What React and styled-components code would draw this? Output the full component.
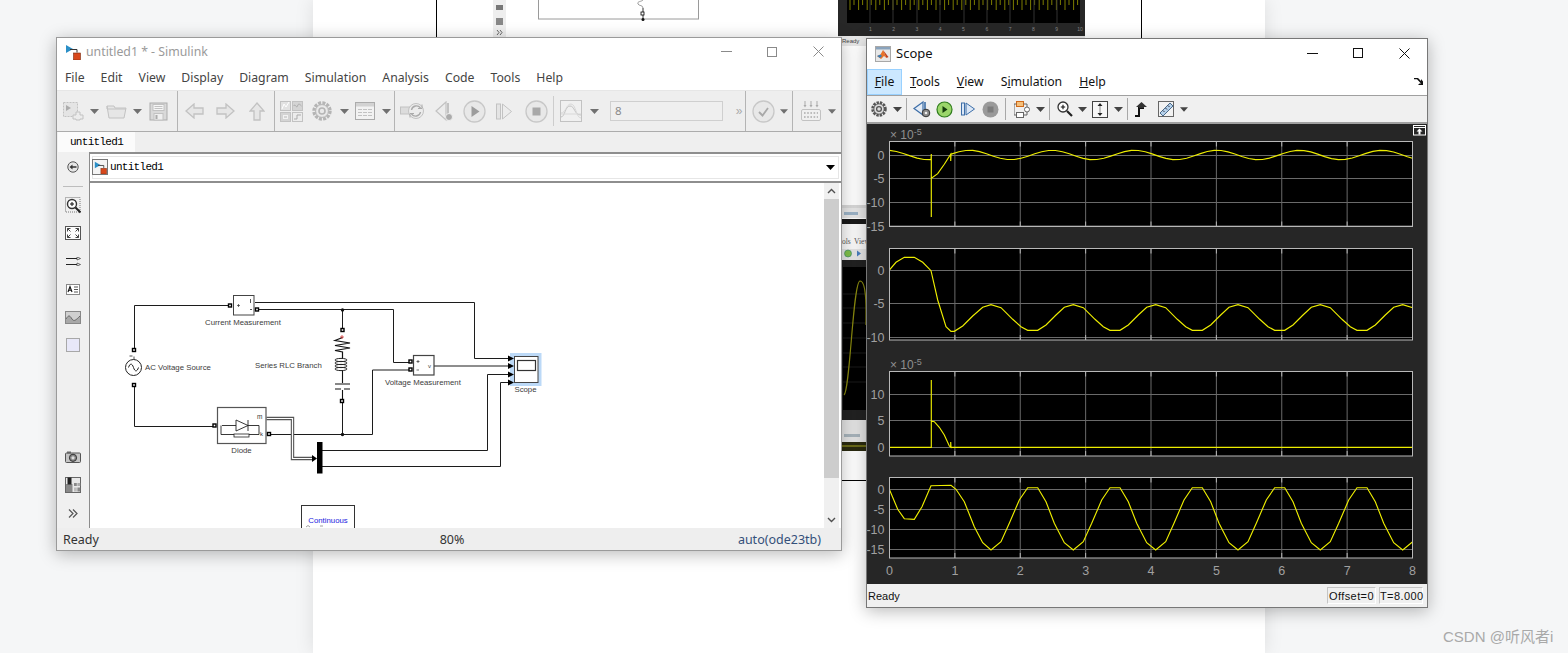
import React from 'react';
import styled, { createGlobalStyle } from 'styled-components';

const Global = createGlobalStyle`
  html, body { margin: 0; padding: 0; height: 100%; overflow: hidden; background: #f5f6f7; }
  body { font-family: "Noto Sans", "Liberation Sans", sans-serif; }
  #root { height: 100%; }
`;

/* ---------- page behind the windows ---------- */
const Desktop = styled.div`
  position: relative;
  width: 1568px;
  height: 653px;
  overflow: hidden;
  background: #f5f6f7;
`;
const Article = styled.div`
  position: absolute;
  left: 313px;
  top: 0;
  width: 952px;
  height: 653px;
  background: #fff;
  box-shadow: 0 0 18px rgba(0, 0, 0, 0.1);
`;
const BackdropArt = styled.svg`
  position: absolute;
  left: 0;
  top: 0;
  display: block;
`;
const Watermark = styled.div`
  position: absolute;
  left: 1443px;
  top: 625px;
  font: 15px "Liberation Sans", "Noto Sans CJK SC", sans-serif;
  color: #a9a9a9;
  white-space: nowrap;
`;

/* ---------- windows ---------- */
const Win = styled.div`
  position: absolute;
  left: ${p => p.$left}px;
  top: ${p => p.$top}px;
  width: ${p => p.$w}px;
  height: ${p => p.$h}px;
  box-sizing: border-box;
  display: flex;
  flex-direction: column;
  background: #f0f0f0;
  border: 1px solid ${p => p.$edge};
  box-shadow: 0 3px 16px rgba(0, 0, 0, 0.28);
`;
const TitleBar = styled.div`
  height: ${p => p.$h}px;
  flex: none;
  box-sizing: border-box;
  display: flex;
  align-items: center;
  background: #fff;
  padding-left: ${p => p.$pad}px;
  font-size: ${p => p.$size}px;
  color: ${p => p.$color};
`;
const TitleText = styled.span`
  margin-left: ${p => p.$gap}px;
  flex: 1;
  white-space: nowrap;
  padding-bottom: ${p => p.$lift || 0}px;
`;
const Caption = styled.div`
  width: 46px;
  height: 100%;
  display: flex;
  align-items: center;
  justify-content: center;
  padding-bottom: ${p => p.$lift || 0}px;
  box-sizing: border-box;
  color: ${p => p.$color};
`;
const MenuBar = styled.div`
  height: ${p => p.$h}px;
  flex: none;
  display: flex;
  align-items: center;
  position: relative;
  gap: ${p => p.$gap}px;
  padding-left: ${p => p.$pad}px;
  background: #fff;
  font-size: 12.25px;
  color: ${p => p.$color};
`;
const MenuItem = styled.span`
  white-space: nowrap;
  padding-bottom: ${p => p.$lift || 0}px;
`;
const MenuActive = styled.span`
  height: 100%;
  box-sizing: border-box;
  width: 35px;
  margin-left: -8px;
  margin-right: -9px;
  padding-bottom: 2px;
  display: flex;
  align-items: center;
  justify-content: center;
  background: #cce8ff;
  border: 1px solid #99d1ff;
`;
const Overflow = styled.span`
  position: absolute;
  right: 4px;
  top: 8px;
  display: flex;
`;

/* ---------- simulink chrome ---------- */
const Toolbar = styled.div`
  height: 42px;
  flex: none;
  box-sizing: border-box;
  display: flex;
  background: #eeeeee;
  border-top: 1px solid #e6e6e6;
  border-bottom: 1px solid #acacac;
`;
const ToolGroup = styled.div`
  flex: ${p => (p.$w ? 'none' : 1)};
  width: ${p => p.$w}px;
  box-sizing: border-box;
  display: flex;
  align-items: center;
  padding-left: ${p => p.$pad || 0}px;
  border-right: 1px solid ${p => (p.$last ? 'transparent' : '#b4b4b4')};
`;
const Tool = styled.div`
  width: ${p => p.$w}px;
  flex: none;
  height: 26px;
  display: flex;
  align-items: center;
  justify-content: center;
  margin-left: ${p => p.$ml || 0}px;
`;
const ToolRule = styled.div`
  width: 1px;
  height: 30px;
  flex: none;
  background: #cdcdcd;
`;
const TimeField = styled.div`
  width: 113px;
  height: 20px;
  flex: none;
  box-sizing: border-box;
  margin-left: 10px;
  padding-left: 4px;
  border: 1px solid #cfcfcf;
  background: #efefef;
  font-size: 11.5px;
  line-height: 18px;
  color: #8a8a8a;
`;
const Chevrons = styled.span`
  font: 12px "Liberation Sans", sans-serif;
  color: ${p => p.$color};
  letter-spacing: -1px;
`;
const TabStrip = styled.div`
  height: 20px;
  flex: none;
  display: flex;
  background: #efefef;
`;
const Tab = styled.div`
  width: 77px;
  margin-left: 1px;
  background: #fbfbfb;
  text-align: center;
  font: 11px/20px "Liberation Mono", monospace;
  letter-spacing: -0.7px;
  color: #000;
`;
const Body = styled.div`
  flex: 1;
  min-height: 0;
  display: flex;
`;
const Sidebar = styled.div`
  width: 32px;
  flex: none;
  display: flex;
  flex-direction: column;
  justify-content: space-between;
  padding: 1px 0;
  box-sizing: border-box;
  background: #f0f0f0;
`;
const SideGroup = styled.div`
  display: flex;
  flex-direction: column;
  align-items: center;
`;
const SideSlot = styled.div`
  height: 28px;
  display: flex;
  align-items: center;
  justify-content: center;
`;
const SideRule = styled.div`
  width: 20px;
  height: 1px;
  margin: 5px 0 4px;
  background: #bdbdbd;
`;
const Main = styled.div`
  flex: 1;
  min-width: 0;
  display: flex;
  flex-direction: column;
  border-left: 1px solid #8c8c8c;
`;
const AddressBar = styled.div`
  height: 31px;
  flex: none;
  box-sizing: border-box;
  display: flex;
  align-items: center;
  gap: 2px;
  padding: 0 6px 1px 2px;
  background: #fff;
  border-top: 2px solid #8e8e8e;
  border-bottom: 2px solid #8e8e8e;
  box-shadow: inset 0 0 0 2px #fff, inset 0 0 0 3px #e6e6e6;
  font: 11px "Liberation Mono", monospace;
  letter-spacing: -0.7px;
  color: #000;
`;
const LogoBox = styled.span`
  width: 16px;
  height: 16px;
  flex: none;
  box-sizing: border-box;
  display: flex;
  align-items: center;
  justify-content: center;
  background: #f4f4f4;
  border: 1px solid #777;
`;
const AddressText = styled.span`
  flex: 1;
`;
const CanvasRow = styled.div`
  flex: 1;
  min-height: 0;
  display: flex;
  padding-right: 2px;
  background: #fff;
`;
const Canvas = styled.div`
  flex: 1;
  min-width: 0;
  background: #fff;
  overflow: hidden;
`;
const ScrollTrack = styled.div`
  width: 15px;
  flex: none;
  display: flex;
  flex-direction: column;
  background: #f0f0f0;
`;
const ScrollBtn = styled.div`
  height: 16px;
  flex: none;
  display: flex;
  align-items: center;
  justify-content: center;
`;
const ScrollThumb = styled.div`
  height: 279px;
  flex: none;
  background: #cdcdcd;
`;
const ScrollRest = styled.div`
  flex: 1;
`;
const SimStatus = styled.div`
  height: 22px;
  flex: none;
  display: grid;
  grid-template-columns: 1fr 1fr 1fr;
  align-items: center;
  padding: 0 20px 0 6px;
  font-size: 12.5px;
  color: #333;
  background: #eeeeee;
`;
const StatusMid = styled.span`
  text-align: center;
  padding-left: 20px;
`;
const StatusRight = styled.span`
  text-align: right;
  color: #34507a;
`;

/* ---------- scope chrome ---------- */
const ScopeTools = styled.div`
  height: 29px;
  flex: none;
  box-sizing: border-box;
  display: flex;
  align-items: center;
  padding-left: 3px;
  background: #f0f0f0;
  border-top: 1px solid #a0a0a0;
  border-bottom: 2px solid #a0a0a0;
`;
const ScopeRule = styled.div`
  width: 1px;
  height: 22px;
  flex: none;
  background: #a8a8a8;
  margin-left: ${p => p.$l || 0}px;
  margin-right: ${p => p.$r || 0}px;
`;
const PlotPanel = styled.div`
  flex: 1;
  min-height: 0;
  display: flex;
  flex-direction: column;
  background: #262626;
`;
const PlotSvg = styled.svg`
  display: block;
  flex: none;
  font-family: "Liberation Sans", sans-serif;
`;
const ScopeStatus = styled.div`
  height: 23px;
  flex: none;
  display: flex;
  align-items: center;
  padding-right: 4px;
  background: #f0f0f0;
  font: 11px "Liberation Sans", sans-serif;
  color: #111;
`;
const ScopeReady = styled.span`
  flex: 1;
  padding-left: 1px;
`;
const StatusCell = styled.span`
  width: ${p => p.$w}px;
  height: 17px;
  margin-left: 3px;
  box-sizing: border-box;
  border: 1px solid #c4c4c4;
  border-right-color: #fff;
  border-bottom-color: #fff;
  line-height: 16px;
  text-align: center;
  letter-spacing: 0.4px;
`;

/* ---------- icons ---------- */
const G = '#c2c2c2';
const GD = '#ababab';

const Drop = ({ c = '#707070' }) => (
  <svg width="9" height="5" viewBox="0 0 9 5"><path d="M0 0h9L4.5 5z" fill={c} /></svg>
);
const LibIcon = () => (
  <svg width="22" height="20" viewBox="0 0 22 20">
    <rect x="1.5" y="1.5" width="14" height="14" fill="#e4e4e4" stroke={G} strokeDasharray="2 1" />
    <path d="M4 4v6l5-3z" fill={GD} />
    <path d="M14 11h4v3h3v4h-3v1h-4v-1h-3v-4h3z" fill="#ececec" stroke={G} />
  </svg>
);
const FolderIcon = () => (
  <svg width="21" height="15" viewBox="0 0 21 15">
    <path d="M1 2h7l1 2h11l-2 10H3z" fill="#e6e6e6" stroke={G} />
    <path d="M1 2v3h19" fill="none" stroke={G} />
  </svg>
);
const SaveIcon = () => (
  <svg width="19" height="19" viewBox="0 0 19 19">
    <rect x="1" y="1" width="17" height="17" fill="#d9d9d9" stroke={GD} />
    <rect x="4" y="2.5" width="11" height="6" fill="#f6f6f6" stroke={G} />
    <path d="M5.5 4.5h8M5.5 6.5h8" stroke={G} />
    <rect x="5" y="11.5" width="9" height="6.5" fill="#efefef" stroke={G} />
    <rect x="6.5" y="13" width="2" height="4" fill={GD} />
  </svg>
);
const ArrowL = () => (
  <svg width="19" height="16" viewBox="0 0 19 16"><path d="M1 8l8-7v4h9v6H9v4z" fill="#e6e6e6" stroke={G} strokeWidth="1.3" /></svg>
);
const ArrowR = () => (
  <svg width="19" height="16" viewBox="0 0 19 16"><path d="M18 8l-8-7v4H1v6h9v4z" fill="#e6e6e6" stroke={G} strokeWidth="1.3" /></svg>
);
const ArrowU = () => (
  <svg width="16" height="19" viewBox="0 0 16 19"><path d="M8 1l7 8h-4v9H5V9H1z" fill="#e6e6e6" stroke={G} strokeWidth="1.3" /></svg>
);
const ModelGrid = () => (
  <svg width="23" height="21" viewBox="0 0 23 21">
    <rect x="0.5" y="0.5" width="10" height="9" fill="#e2e2e2" stroke={G} />
    <path d="M2 8l2-5 2 3 3-5" fill="none" stroke="#fff" />
    <rect x="12.5" y="0.5" width="10" height="9" fill="#d4d4d4" stroke={G} />
    <path d="M13.5 5c2-3 3 3 4 0s2-2 4 0" fill="none" stroke={GD} />
    <rect x="0.5" y="11.5" width="10" height="9" fill="#d4d4d4" stroke={G} />
    <rect x="3.5" y="14.5" width="4" height="3" fill="none" stroke="#f2f2f2" />
    <rect x="12.5" y="11.5" width="10" height="9" fill="#ececec" stroke={G} />
    <path d="M14 18h3v-4h4" fill="none" stroke={GD} />
  </svg>
);
const Gear = ({ size = 20, c = '#b5b5b5', in2 = '#e9e9e9' }) => (
  <svg width={size} height={size} viewBox="0 0 20 20">
    <circle cx="10" cy="10" r="8" fill="none" stroke={c} strokeWidth="3.4" strokeDasharray="3 1.2" />
    <circle cx="10" cy="10" r="6.4" fill={in2} stroke={c} />
    <circle cx="10" cy="10" r="3" fill="none" stroke={c} strokeWidth="1.6" />
  </svg>
);
const TableIcon = () => (
  <svg width="20" height="18" viewBox="0 0 20 18">
    <rect x="0.5" y="0.5" width="19" height="17" fill="#f2f2f2" stroke={GD} />
    <rect x="1" y="1" width="18" height="3.5" fill="#d2d2d2" />
    <path d="M3 7.5h14M3 10.5h14M3 13.5h14" stroke={G} strokeDasharray="4 1" />
  </svg>
);
const RefreshIcon = () => (
  <svg width="25" height="20" viewBox="0 0 25 20">
    <rect x="0.5" y="6" width="10" height="7" fill="#dcdcdc" stroke={G} />
    <circle cx="16" cy="10" r="7.5" fill="#ececec" stroke={G} />
    <path d="M11.5 9a5 5 0 0 1 9-2M20.5 11a5 5 0 0 1-9 2" fill="none" stroke={GD} strokeWidth="1.4" />
    <path d="M18 7.5h4V3.5M14 12.5h-4v4" fill="none" stroke={GD} />
  </svg>
);
const StepBackGray = () => (
  <svg width="19" height="21" viewBox="0 0 19 21">
    <path d="M11 1L1 10l10 9z" fill="#ececec" stroke={G} strokeWidth="1.2" />
    <path d="M13 2v15" stroke={G} strokeWidth="2" />
    <circle cx="14" cy="16" r="3.5" fill={GD} stroke="#eee" />
  </svg>
);
const RoundBtn = ({ children }) => (
  <svg width="23" height="23" viewBox="0 0 23 23">
    <circle cx="11.5" cy="11.5" r="10.5" fill="#e8e8e8" stroke="#c8c8c8" strokeWidth="1.3" />
    {children}
  </svg>
);
const StepFwdGray = () => (
  <svg width="16" height="17" viewBox="0 0 16 17">
    <rect x="0.5" y="1" width="4" height="15" fill="#e4e4e4" stroke={G} />
    <path d="M6.5 1l9 7.5-9 7.5z" fill="#ececec" stroke={G} />
  </svg>
);
const ScopeMini = () => (
  <svg width="22" height="22" viewBox="0 0 22 22">
    <rect x="0.5" y="0.5" width="21" height="21" fill="#f0f0f0" stroke={G} />
    <path d="M1 17c4 0 4-11 9-11s4 9 11 9" fill="none" stroke={G} />
    <path d="M1 13c5 0 5-9 10-9s5 14 10 14" fill="none" stroke="#d8d8d8" />
    <path d="M1 14h20" stroke="#d8d8d8" />
  </svg>
);
const KeyIcon = () => (
  <svg width="20" height="20" viewBox="0 0 20 20">
    <rect x="0.5" y="8.5" width="19" height="11" rx="1.5" fill="#f0f0f0" stroke={G} />
    <path d="M3 12h14M3 16h14" stroke={GD} strokeWidth="1.6" strokeDasharray="1.6 1.6" />
    <path d="M4 0v5M10 0v5M16 0v5" stroke={GD} />
    <path d="M2.5 4h3L4 6.5zM8.5 4h3L10 6.5zM14.5 4h3L16 6.5z" fill={GD} />
  </svg>
);
const SimLogo = ({ size = 16 }) => (
  <svg width={size} height={size} viewBox="0 0 16 16">
    <path d="M1 1v8l7-4z" fill="#2b8fc7" />
    <path d="M5 5.500h7v3" fill="none" stroke="#333" />
    <rect x="8.500" y="9" width="7" height="7" fill="#d8481c" stroke="#7a2a10" strokeWidth="0.6" />
  </svg>
);
const MatlabLogo = () => (
  <svg width="16" height="16" viewBox="0 0 16 16">
    <rect x="0.5" y="0.5" width="15" height="15" fill="#e8e8e8" stroke="#a8a8a8" />
    <rect x="1" y="1" width="14" height="2.5" fill="#8aa3bc" />
    <path d="M2 10l3.5-1.5L8 4l3.5 8-2.5-2-3 3z" fill="#e8742a" />
    <path d="M2 10l3.5-1.5L7 10l-2 2z" fill="#3a7fb8" />
    <path d="M8 4l3.5 8 2-1z" fill="#c2401c" />
  </svg>
);
const SideBack = () => (
  <svg width="12" height="12" viewBox="0 0 12 12">
    <circle cx="6" cy="6" r="5.2" fill="#e6e6e6" stroke="#555" />
    <path d="M2.5 6l3-2.4v1.6h4v1.6h-4v1.6z" fill="#333" />
  </svg>
);
const ZoomSide = () => (
  <svg width="16" height="17" viewBox="0 0 16 17">
    <rect x="0.5" y="0.5" width="14.5" height="14.5" fill="none" stroke="#777" strokeDasharray="1 1" />
    <circle cx="7" cy="7" r="4.5" fill="#fff" stroke="#333" strokeWidth="1.4" />
    <path d="M5 7h4M7 5v4" stroke="#111" />
    <path d="M10.5 10.5l5 5" stroke="#222" strokeWidth="2" />
  </svg>
);
const FitSide = () => (
  <svg width="16" height="14" viewBox="0 0 16 14">
    <rect x="0.5" y="0.5" width="15" height="13" fill="#fdfdfd" stroke="#555" />
    <path d="M2.5 2.5h3M2.5 2.5v3M2.5 2.5l3 3M13.5 2.5h-3M13.5 2.5v3M13.5 2.5l-3 3M2.5 11.5h3M2.5 11.5v-3M2.5 11.5l3-3M13.5 11.5h-3M13.5 11.5v-3M13.5 11.5l-3-3" stroke="#444" fill="none" />
  </svg>
);
const RouteSide = () => (
  <svg width="15" height="9" viewBox="0 0 15 9">
    <path d="M0 1.5h11M0 7.5h11" stroke="#222" />
    <path d="M11 0l3.5 1.5L11 3zM11 6l3.5 1.5L11 9z" fill="#fff" stroke="#333" strokeWidth="0.7" />
  </svg>
);
const TextSide = () => (
  <svg width="14" height="11" viewBox="0 0 14 11">
    <rect x="0.5" y="0.5" width="13" height="10" fill="#fff" stroke="#888" />
    <path d="M2 8l2-5.5L6 8M2.8 6.2h2.4" fill="none" stroke="#111" strokeWidth="1.1" />
    <path d="M8 3h4M8 5.5h4M8 8h4" stroke="#555" />
  </svg>
);
const ImageSide = () => (
  <svg width="16" height="13" viewBox="0 0 16 13">
    <rect x="0.5" y="0.5" width="15" height="12" fill="#d0d0d0" stroke="#888" />
    <path d="M1 8c3-5 4-3 6 0s4 1 8-3v7H1z" fill="#a8a8a8" />
    <path d="M1 8c3-5 4-3 6 0s4 1 8-3" fill="none" stroke="#666" />
  </svg>
);
const BoxSide = () => (
  <svg width="14" height="14" viewBox="0 0 14 14">
    <rect x="0.5" y="0.5" width="13" height="13" fill="#e8e8f8" stroke="#a8a8a8" />
  </svg>
);
const CameraSide = () => (
  <svg width="16" height="12" viewBox="0 0 16 12">
    <rect x="0.5" y="2" width="15" height="9.5" rx="1" fill="#c4c4c4" stroke="#555" />
    <rect x="2" y="0.5" width="4" height="2" fill="#666" />
    <circle cx="8" cy="6.8" r="3.6" fill="#888" stroke="#333" />
    <circle cx="8" cy="6.8" r="1.6" fill="#ddd" />
  </svg>
);
const TableSide = () => (
  <svg width="16" height="16" viewBox="0 0 16 16">
    <rect x="0.5" y="0.5" width="15" height="15" fill="#e8e8e8" stroke="#666" />
    <rect x="9" y="6" width="2.8" height="3" fill="#888" />
    <rect x="12.4" y="6" width="2.8" height="3" fill="#aaa" />
    <rect x="9" y="10.5" width="2.8" height="4" fill="#bbb" />
    <rect x="12.4" y="10.5" width="2.8" height="4" fill="#888" />
    <rect x="1" y="7" width="6.5" height="8" fill="#888" />
    <rect x="2.5" y="0.5" width="4" height="7" fill="#222" />
  </svg>
);
const SideChev = () => (
  <svg width="10" height="9" viewBox="0 0 10 9">
    <path d="M1 .5l4 4-4 4M5 .5l4 4-4 4" fill="none" stroke="#555" strokeWidth="1.2" />
  </svg>
);
const MinIcon = () => (<svg width="11" height="1" viewBox="0 0 11 1"><path d="M0 .5h11" stroke="currentColor" /></svg>);
const MaxIcon = () => (<svg width="10" height="10" viewBox="0 0 10 10"><rect x=".5" y=".5" width="9" height="9" fill="none" stroke="currentColor" /></svg>);
const CloseIcon = () => (<svg width="11" height="11" viewBox="0 0 11 11"><path d="M.5.5l10 10M10.5.5l-10 10" stroke="currentColor" /></svg>);

/* scope toolbar icons */
const StepBackColor = () => (
  <svg width="20" height="18" viewBox="0 0 20 18">
    <path d="M11 2L2 8.5l9 6.500z" fill="#e4ecf6" stroke="#3d6ea8" strokeWidth="1.2" />
    <path d="M13 2v11" stroke="#3d6ea8" strokeWidth="1.6" />
    <circle cx="14" cy="13" r="3.8" fill="#8a8a8a" stroke="#333" />
    <circle cx="14" cy="13" r="1.3" fill="#eee" />
  </svg>
);
const PlayGreen = () => (
  <svg width="17" height="17" viewBox="0 0 17 17">
    <circle cx="8.5" cy="8.5" r="7.5" fill="#9bd66a" stroke="#2f7d1d" strokeWidth="1.2" />
    <path d="M6.500 5l5 3.500-5 3.500z" fill="#153d0c" />
  </svg>
);
const StepFwdBlue = () => (
  <svg width="14" height="14" viewBox="0 0 14 14">
    <rect x="0.5" y="1" width="3" height="12" fill="#dbe7f6" stroke="#3d6ea8" />
    <path d="M5 1l8.500 6L5 13z" fill="#dbe7f6" stroke="#3d6ea8" />
  </svg>
);
const StopGray = () => (
  <svg width="17" height="17" viewBox="0 0 17 17">
    <circle cx="8.5" cy="8.5" r="8" fill="#9a9a9a" />
    <rect x="5.5" y="5.5" width="6" height="6" fill="#7c7c7c" />
  </svg>
);
const BlockIcon = () => (
  <svg width="17" height="17" viewBox="0 0 17 17">
    <rect x="2.5" y="0.5" width="7" height="5" fill="#f6c07a" stroke="#d06a1a" />
    <rect x="2.5" y="11.5" width="7" height="5" fill="#fff" stroke="#666" />
    <circle cx="13" cy="8.5" r="2.5" fill="#fff" stroke="#666" />
    <path d="M0 3h2.500M0 3v11h2.500M9.500 3H13v3M9.500 14H13v-3" fill="none" stroke="#666" />
  </svg>
);
const ZoomIcon = () => (
  <svg width="16" height="16" viewBox="0 0 16 16">
    <circle cx="6" cy="6" r="5" fill="#fff" stroke="#333" strokeWidth="1.3" />
    <path d="M3.800 6h4.400M6 3.800v4.400" stroke="#111" strokeWidth="1.1" />
    <path d="M10 10l5 5" stroke="#222" strokeWidth="2.2" />
  </svg>
);
const ScaleIcon = () => (
  <svg width="16" height="17" viewBox="0 0 16 17">
    <rect x="0.5" y="0.5" width="15" height="16" fill="#f7f7f7" stroke="#444" />
    <path d="M8 2l2.500 3h-5zM8 15l2.500-3h-5z" fill="#222" />
    <path d="M8 5v7" stroke="#888" />
  </svg>
);
const StairIcon = () => (
  <svg width="14" height="16" viewBox="0 0 14 16">
    <path d="M1 15h4V7h4V4" fill="none" stroke="#111" strokeWidth="2" />
    <path d="M2 6l5.500-5L13 6h-3v1H5V6z" fill="#333" />
  </svg>
);
const RulerIcon = () => (
  <svg width="17" height="17" viewBox="0 0 17 17">
    <rect x="0.5" y="0.5" width="15" height="15" fill="#f2f2f2" stroke="#666" />
    <path d="M2 12L12 2l3 3L5 15z" fill="#b4d0ea" stroke="#4a6a8a" />
    <path d="M5 9.500l1.500 1.500M7.500 7l1.500 1.500M10 4.500L11.500 6" stroke="#334" />
  </svg>
);
const OverflowIcon = () => (
  <svg width="9" height="8" viewBox="0 0 9 8">
    <path d="M0 1h4l3 3V2l2 2.500V8H4l1.500-1.500H7L3 2.200H0z" fill="#111" />
  </svg>
);

/* ---------- simulink diagram ---------- */
const Port = ({ x, y }) => <rect x={x - 1.5} y={y - 1.5} width="3" height="3" fill="#fff" stroke="#000" strokeWidth="1.4" />;
const Dot = ({ x, y }) => <circle cx={x} cy={y} r="1.7" fill="#111" />;
const Arrow = ({ y }) => <path d={`M508 ${y - 3}l6 3-6 3z`} fill="#000" />;
const Lbl = ({ x, y, a = 'start', c = '#3c3c3c', children }) => (
  <text x={x} y={y} textAnchor={a} fontSize="7.8" fontFamily="Liberation Sans, sans-serif" fill={c}>{children}</text>
);

const Diagram = () => (
  <svg width="735" height="345" viewBox="90 183 735 345" style={{ display: 'block' }}>
    <g fill="none" stroke="#1c1c1c" strokeWidth="1">
      <path d="M134.500 350V305.500H229" />
      <path d="M134.500 386V426.500H213" />
      <path d="M255 302.500H474.500V358.500H508" />
      <path d="M258 309.500H393.500V362.500H409" />
      <path d="M342.500 310V329M342.500 403V435" />
      <path d="M270 434.500H372.500V370H409" />
      <path d="M434 366H508" />
      <path d="M322 450.500H487.500V374.500H508" />
      <path d="M322 466.500H500.500V382.500H508" />
    </g>
    <path d="M266.500 418.500H292.500V458.500H313" fill="none" stroke="#555" strokeWidth="3.400" />
    <path d="M266.500 418.500H292.500V458.500H313" fill="none" stroke="#fff" strokeWidth="1.200" />
    <path d="M312 455l5 3.500-5 3.500z" fill="#000" />
    <rect x="317" y="442" width="5.500" height="31.500" fill="#000" />

    <rect x="233.500" y="295.500" width="20.500" height="19.500" fill="#fff" stroke="#444" />
    <path d="M237 305.500h3M238.500 304v3" stroke="#333" strokeWidth="0.7" />
    <path d="M250.500 299v4M250 309.500h2" stroke="#555" />
    <Port x={230} y={305.500} />
    <Port x={257} y={309.500} />
    <Dot x={342.500} y={310} />
    <Dot x={342.500} y={434.500} />
    <Lbl x={205} y={325}>Current Measurement</Lbl>

    <circle cx="133.500" cy="367.500" r="8" fill="#fff" stroke="#222" />
    <path d="M128.500 367.500c1.500-4.500 3.500-4.500 5 0s3.500 4.500 5 0" fill="none" stroke="#222" />
    <path d="M134 356.500v3M129.500 356h3" stroke="#222" strokeWidth="0.8" />
    <Port x={134} y={350} />
    <Port x={134} y={385} />
    <Lbl x={145} y={370}>AC Voltage Source</Lbl>

    <rect x="217.500" y="407.500" width="48.500" height="36" fill="#fff" stroke="#555" strokeWidth="1.200" />
    <path d="M222 425.500h14M236 420v11l12-5.500zM248 420v11M248 425.500h11v9h-38v-9" fill="none" stroke="#222" strokeWidth="0.9" />
    <rect x="234" y="434" width="15" height="3" fill="#fff" stroke="#222" strokeWidth="0.8" />
    <text x="257" y="419" fontSize="6.500" fill="#333" fontFamily="Liberation Sans, sans-serif">m</text>
    <text x="260" y="436" fontSize="6" fill="#333" fontFamily="Liberation Sans, sans-serif">k</text>
    <Port x={214.500} y={425.500} />
    <Port x={269} y={434} />
    <Lbl x={241.500} y={453} a="middle">Diode</Lbl>

    <Port x={342.500} y={330} />
    <Port x={342} y={401} />
    <path d="M342.500 337.500L335 340.500l15 2.500-15 2.500 15 2.500-15 2.500 7.500 1.500v6" fill="none" stroke="#111" strokeWidth="1.200" />
    <path d="M340 337h4M342 335v4" stroke="#c22" strokeWidth="0.7" />
    <g fill="none" stroke="#222" strokeWidth="1">
      <ellipse cx="341" cy="360" rx="6" ry="1.600" />
      <ellipse cx="341" cy="363" rx="6" ry="1.600" />
      <ellipse cx="341" cy="366" rx="6" ry="1.600" />
      <ellipse cx="341" cy="369" rx="6" ry="1.600" />
    </g>
    <path d="M342.500 371v12M335 384h15M335 389h6M344 389h6M342.500 390v9" fill="none" stroke="#111" strokeWidth="1.100" />
    <Lbl x={255} y={368}>Series RLC Branch</Lbl>

    <rect x="413.500" y="355.500" width="20.500" height="19.500" fill="#fff" stroke="#444" strokeWidth="1.200" />
    <path d="M416.500 361.500h3M418 360v3M416.500 370h2.500" stroke="#333" strokeWidth="0.7" />
    <text x="428" y="368" fontSize="6" fill="#444" fontFamily="Liberation Sans, sans-serif">v</text>
    <Port x={410.500} y={361.500} />
    <Port x={410.500} y={369.500} />
    <Lbl x={385} y={385}>Voltage Measurement</Lbl>

    <rect x="510" y="353" width="31.500" height="33" fill="#bcd9f7" />
    <rect x="514.500" y="356.500" width="23.500" height="26" fill="#fff" stroke="#444" />
    <rect x="517.500" y="360.500" width="18" height="10" fill="#fff" stroke="#333" strokeWidth="1.200" />
    <Arrow y={358.500} />
    <Arrow y={366} />
    <Arrow y={374.500} />
    <Arrow y={382.500} />
    <Lbl x={525.500} y={392} a="middle">Scope</Lbl>

    <rect x="301.500" y="505.500" width="53" height="30" fill="#fff" stroke="#333" />
    <Lbl x={328} y={523} a="middle" c="#1a1ae0">Continuous</Lbl>
    <path d="M306 527l2-1.500 2 1.500M320 526h3" fill="none" stroke="#888" strokeWidth="0.8" />
  </svg>
);

/* ---------- scope plots ---------- */
const AX_L = 889.5;
const AX_R = 1412.5;
const SEC = (AX_R - AX_L) / 8;
const zp = (pts, oy) => pts.map(([x, y]) => [866 + x / 3, oy + y / 3]);
const repeat = (cycle, period, maxX) => {
  const out = [];
  for (let k = 0; ; k++) {
    for (const [x, y] of cycle) {
      const nx = x + k * period;
      if (nx > maxX) return out;
      out.push([nx, y]);
    }
  }
};
const str = pts => pts.map(([x, y]) => `${x.toFixed(1)},${y.toFixed(1)}`).join(' ');

const wave = x => 155 - 4.7 * Math.cos((2 * Math.PI * (x - 887)) / 82.5);
const sample = (a, b) => {
  const out = [];
  for (let x = a; x < b; x += 6.9) out.push([x, wave(x)]);
  out.push([b, wave(b)]);
  return out;
};
const curve1 = [
  ...sample(AX_L, 931),
  [931.3, 154], [931.3, 217], [931.3, 178.3],
  ...zp([[215, 413], [235, 385], [254, 355], [254, 375], [255, 355]], 36),
  ...sample(952, AX_R),
];
const curve2 = [
  ...zp([[70, 120], [90, 97], [115, 82], [145, 82], [170, 97], [195, 122], [215, 210], [240, 290], [255, 304], [265, 304], [290, 288], [320, 258], [350, 232]], 230),
  ...zp(repeat([[375, 224], [405, 233], [440, 268], [465, 290], [485, 301], [515, 301], [540, 285], [570, 255], [595, 232]], 247, 1700), 230),
];
const curve3 = zp([[70, 652], [196, 652], [196, 450], [196, 573], [205, 575], [220, 592], [235, 615], [250, 648], [254, 652], [254, 636], [255, 652], [1641, 652]], 230);
const curve4 = [
  ...zp([[70, 148], [95, 208], [115, 236], [145, 238], [168, 200], [195, 137], [255, 136], [270, 148], [295, 185], [325, 260], [350, 308]], 440),
  ...zp(repeat([[375, 330], [405, 305], [430, 250], [460, 180], [485, 143], [515, 143], [540, 185], [565, 250], [595, 308]], 247, 1700), 440),
];

const Exponent = ({ y }) => (
  <text x={890} y={y} fill="#8f8f8f" fontSize="12">
    <tspan>× 10</tspan>
    <tspan fontSize="9" dy="-4">-5</tspan>
  </text>
);

const Plot = ({ id, top, height, y0, y1, ticks, pts, exp, xLabels, children }) => (
  <PlotSvg width="560" height={height} viewBox={`867 ${top} 560 ${height}`}>
    <defs>
      <clipPath id={id}><rect x={AX_L} y={y0} width={AX_R - AX_L} height={y1 - y0} /></clipPath>
    </defs>
    <rect x={AX_L} y={y0} width={AX_R - AX_L} height={y1 - y0} fill="#000" />
    {ticks.map(t => (
      <line key={t.l} x1={AX_L} x2={AX_R} y1={t.y} y2={t.y} stroke="#6a6a6a" />
    ))}
    {[1, 2, 3, 4, 5, 6, 7].map(k => (
      <g key={k}>
        <line x1={AX_L + k * SEC} x2={AX_L + k * SEC} y1={y0} y2={y1} stroke="#6a6a6a" />
        <line x1={AX_L + k * SEC} x2={AX_L + k * SEC} y1={y0} y2={y0 + 5} stroke="#b4b4b4" />
        <line x1={AX_L + k * SEC} x2={AX_L + k * SEC} y1={y1 - 5} y2={y1} stroke="#b4b4b4" />
      </g>
    ))}
    <polyline points={str(pts)} fill="none" stroke="#eded00" strokeWidth="1.15" clipPath={`url(#${id})`} />
    <rect x={AX_L} y={y0} width={AX_R - AX_L} height={y1 - y0} fill="none" stroke="#b8b8b8" />
    {ticks.map(t => (
      <text key={t.l} x="884.5" y={t.y + 4.5} fill="#a0a0a0" fontSize="12.5" textAnchor="end">{t.l}</text>
    ))}
    {exp && <Exponent y={exp} />}
    {xLabels && [0, 1, 2, 3, 4, 5, 6, 7, 8].map(k => (
      <text key={k} x={AX_L + k * SEC} y={xLabels} fill="#a0a0a0" fontSize="12.5" textAnchor="middle">{k}</text>
    ))}
    {children}
  </PlotSvg>
);

/* ---------- backdrop drawing ---------- */
const Backdrop = () => {
  const saw = [];
  for (let x = 850; x < 1078; x += 8.6) {
    saw.push(`M${x} 0v10M${x + 4} 0v5`);
  }
  return (
    <BackdropArt width="1568" height="653" viewBox="0 0 1568 653">
      <path d="M436.5 0v37M1141.5 0v40" stroke="#000" />
      <rect x="493" y="0" width="13" height="37" fill="#eeeeee" />
      <rect x="496" y="5" width="7" height="5" fill="#777" />
      <rect x="496" y="18" width="7" height="7" fill="#888" />
      <path d="M497 30l2 2.5-2 2.5M500 30l2 2.5-2 2.5" stroke="#666" fill="none" />
      <rect x="538.5" y="-2" width="160" height="21" fill="none" stroke="#9a9a9a" />
      <path d="M643 0c-2 2-6 1-5 4 1 2 5 1 5 4" stroke="#999" fill="none" />
      <path d="M643 8v12" stroke="#333" />
      <rect x="641" y="12" width="3" height="3" fill="#fff" stroke="#000" strokeWidth="0.8" />
      <circle cx="643" cy="19.5" r="1.5" fill="#111" />

      <rect x="838" y="0" width="247" height="36" fill="#272727" />
      <rect x="847" y="0" width="233" height="23" fill="#000" />
      <path d={saw.join('')} stroke="#8a8a00" strokeWidth="0.9" />
      <path d="M870 0v23M893 0v23M917 0v23M940 0v23M964 0v23M987 0v23M1010 0v23M1034 0v23M1057 0v23" stroke="#333" />
      {[1, 2, 3, 4, 5, 6, 7, 8, 9, 10].map(k => (
        <text key={k} x={847 + k * 23.3} y="31" fontSize="5" fill="#888" textAnchor="middle" fontFamily="Liberation Sans, sans-serif">{k}</text>
      ))}
      <rect x="838" y="36" width="247" height="10" fill="#e8e8e8" />
      <text x="842" y="43" fontSize="6" fill="#444" fontFamily="Liberation Sans, sans-serif">Ready</text>

      <rect x="842" y="205" width="24" height="3" fill="#d8d8d8" />
      <rect x="842" y="208" width="24" height="10" fill="#e8e8e8" />
      <rect x="844" y="212" width="14" height="3" fill="#9db4c8" />
      <rect x="842" y="219" width="24" height="5" fill="#1a1a1a" />
      <rect x="842" y="224" width="24" height="31" fill="#fafafa" />
      <text x="842" y="244" fontSize="7.5" fill="#555" fontFamily="Liberation Serif, serif">ols</text>
      <text x="854" y="244" fontSize="7.5" fill="#555" fontFamily="Liberation Serif, serif">View</text>
      <rect x="842" y="249" width="24" height="11" fill="#e6e6e6" />
      <circle cx="848" cy="253.5" r="3.5" fill="#7fbf4a" stroke="#386" strokeWidth="0.6" />
      <path d="M857 250.5l4 3-4 3z" fill="#4a7fc0" />
      <rect x="842" y="260" width="24" height="160" fill="#222" />
      <rect x="843" y="267" width="23" height="143" fill="#000" />
      <path d="M843 294h23M843 308h23M843 323h23M843 338h23M843 353h23M843 367h23M843 382h23" stroke="#1d1d1d" />
      <path d="M844 395c6-4 9-114 16-114s6 30 6 44" fill="none" stroke="#8a8a10" strokeWidth="1.2" />
      <rect x="842" y="420" width="24" height="22" fill="#e4e4e4" />
      <rect x="844" y="434" width="16" height="3" fill="#a8b4bc" />
      <rect x="842" y="442" width="24" height="9" fill="#2a2a10" />
      <rect x="842" y="445" width="24" height="2" fill="#6a6a18" />
      <path d="M842 480.5h24" stroke="#000" />
    </BackdropArt>
  );
};

export default function App() {
  return (
    <Desktop>
      <Global />
      <Article />
      <Backdrop />

      <Win $left={56} $top={37} $w={786} $h={514} $edge="#9a9a9a">
        <TitleBar $h={27} $pad={8} $color="#9a9a9a" $size={12.3}>
          <SimLogo />
          <TitleText $gap={5}>untitled1 * - Simulink</TitleText>
          <Caption $color="#8a8a8a"><MinIcon /></Caption>
          <Caption $color="#8a8a8a"><MaxIcon /></Caption>
          <Caption $color="#8a8a8a"><CloseIcon /></Caption>
        </TitleBar>
        <MenuBar $h={25} $gap={16} $pad={8} $color="#444">
          {['File', 'Edit', 'View', 'Display', 'Diagram', 'Simulation', 'Analysis', 'Code', 'Tools', 'Help'].map(m => (
            <MenuItem key={m}>{m}</MenuItem>
          ))}
        </MenuBar>
        <Toolbar>
          <ToolGroup $w={121} $pad={4}>
            <Tool $w={24}><LibIcon /></Tool>
            <Tool $w={18}><Drop /></Tool>
            <Tool $w={26}><FolderIcon /></Tool>
            <Tool $w={16}><Drop /></Tool>
            <Tool $w={26}><SaveIcon /></Tool>
          </ToolGroup>
          <ToolGroup $w={97} $pad={1}>
            <Tool $w={31}><ArrowL /></Tool>
            <Tool $w={31}><ArrowR /></Tool>
            <Tool $w={31}><ArrowU /></Tool>
          </ToolGroup>
          <ToolGroup $w={120}>
            <Tool $w={32}><ModelGrid /></Tool>
            <Tool $w={30}><Gear /></Tool>
            <Tool $w={14}><Drop /></Tool>
            <Tool $w={28}><TableIcon /></Tool>
            <Tool $w={14}><Drop /></Tool>
          </ToolGroup>
          <ToolGroup $w={351}>
            <Tool $w={34}><RefreshIcon /></Tool>
            <Tool $w={30}><StepBackGray /></Tool>
            <Tool $w={30}><RoundBtn><path d="M8.5 6l8 5.5-8 5.5z" fill="#9c9c9c" /></RoundBtn></Tool>
            <Tool $w={30}><StepFwdGray /></Tool>
            <Tool $w={34}><RoundBtn><rect x="7.5" y="7.5" width="8" height="8" fill="#a8a8a8" /></RoundBtn></Tool>
            <ToolRule />
            <Tool $w={34}><ScopeMini /></Tool>
            <Tool $w={12}><Drop /></Tool>
            <TimeField>8</TimeField>
            <Tool $w={31}><Chevrons $color="#aaa">»</Chevrons></Tool>
          </ToolGroup>
          <ToolGroup $w={47}>
            <Tool $w={34}><RoundBtn><path d="M7 12l3.5 3.5L16 8" fill="none" stroke="#a8a8a8" strokeWidth="1.8" /></RoundBtn></Tool>
            <Tool $w={8}><Drop /></Tool>
          </ToolGroup>
          <ToolGroup $last $pad={1}>
            <Tool $w={34}><KeyIcon /></Tool>
            <Tool $w={8}><Drop /></Tool>
          </ToolGroup>
        </Toolbar>
        <TabStrip>
          <Tab>untitled1</Tab>
        </TabStrip>
        <Body>
          <Sidebar>
            <SideGroup>
              <SideSlot><SideBack /></SideSlot>
              <SideRule />
              <SideSlot><ZoomSide /></SideSlot>
              <SideSlot><FitSide /></SideSlot>
              <SideSlot><RouteSide /></SideSlot>
              <SideSlot><TextSide /></SideSlot>
              <SideSlot><ImageSide /></SideSlot>
              <SideSlot><BoxSide /></SideSlot>
            </SideGroup>
            <SideGroup>
              <SideSlot><CameraSide /></SideSlot>
              <SideSlot><TableSide /></SideSlot>
              <SideSlot><SideChev /></SideSlot>
            </SideGroup>
          </Sidebar>
          <Main>
            <AddressBar>
              <LogoBox><SimLogo size={13} /></LogoBox>
              <AddressText>untitled1</AddressText>
              <Drop c="#000" />
            </AddressBar>
            <CanvasRow>
              <Canvas><Diagram /></Canvas>
              <ScrollTrack>
                <ScrollBtn>
                  <svg width="9" height="6" viewBox="0 0 9 6"><path d="M1 5l3.5-3.5L8 5" fill="none" stroke="#505050" strokeWidth="1.4" /></svg>
                </ScrollBtn>
                <ScrollThumb />
                <ScrollRest />
                <ScrollBtn>
                  <svg width="9" height="6" viewBox="0 0 9 6"><path d="M1 1l3.5 3.5L8 1" fill="none" stroke="#505050" strokeWidth="1.4" /></svg>
                </ScrollBtn>
              </ScrollTrack>
            </CanvasRow>
          </Main>
        </Body>
        <SimStatus>
          <span>Ready</span>
          <StatusMid>80%</StatusMid>
          <StatusRight>auto(ode23tb)</StatusRight>
        </SimStatus>
      </Win>

      <Win $left={866} $top={38} $w={562} $h={570} $edge="#777">
        <TitleBar $h={30} $pad={8} $color="#111" $size={13}>
          <MatlabLogo />
          <TitleText $gap={5} $lift={2}>Scope</TitleText>
          <Caption $color="#111" $lift={2}><MinIcon /></Caption>
          <Caption $color="#111" $lift={2}><MaxIcon /></Caption>
          <Caption $color="#111" $lift={2}><CloseIcon /></Caption>
        </TitleBar>
        <MenuBar $h={26} $gap={17} $pad={8} $color="#111">
          <MenuActive><span><u>F</u>ile</span></MenuActive>
          <MenuItem $lift={2}><u>T</u>ools</MenuItem>
          <MenuItem $lift={2}><u>V</u>iew</MenuItem>
          <MenuItem $lift={2}>S<u>i</u>mulation</MenuItem>
          <MenuItem $lift={2}><u>H</u>elp</MenuItem>
          <Overflow><OverflowIcon /></Overflow>
        </MenuBar>
        <ScopeTools>
          <Tool $w={18}><Gear size={16} c="#555" in2="#ddd" /></Tool>
          <Tool $w={18}><Drop c="#444" /></Tool>
          <ScopeRule $r={3} />
          <Tool $w={23}><StepBackColor /></Tool>
          <Tool $w={23}><PlayGreen /></Tool>
          <Tool $w={23}><StepFwdBlue /></Tool>
          <Tool $w={23}><StopGray /></Tool>
          <ScopeRule $l={3} $r={5} />
          <Tool $w={22}><BlockIcon /></Tool>
          <Tool $w={14}><Drop c="#444" /></Tool>
          <ScopeRule $l={2} $r={4} />
          <Tool $w={22}><ZoomIcon /></Tool>
          <Tool $w={12}><Drop c="#444" /></Tool>
          <Tool $w={24}><ScaleIcon /></Tool>
          <Tool $w={12}><Drop c="#444" /></Tool>
          <ScopeRule $l={3} $r={2} />
          <Tool $w={22}><StairIcon /></Tool>
          <Tool $w={28}><RulerIcon /></Tool>
          <Tool $w={8}><Drop c="#444" /></Tool>
        </ScopeTools>
        <PlotPanel>
          <Plot id="p1" top={124} height={113} y0={141.5} y1={226.5} pts={curve1} exp={139}
            ticks={[{ l: '0', y: 155.5 }, { l: '-5', y: 178.5 }, { l: '-10', y: 202.5 }, { l: '-15', y: 226 }]}>
            <rect x="1413.5" y="125.5" width="12" height="9.5" fill="none" stroke="#fff" />
            <path d="M1414 127.5h11" stroke="#fff" />
            <path d="M1419.5 128.5l3 3h-2v3h-2v-3h-2z" fill="#fff" />
          </Plot>
          <Plot id="p2" top={237} height={117} y0={248.5} y1={340} pts={curve2}
            ticks={[{ l: '0', y: 270.5 }, { l: '-5', y: 303.5 }, { l: '-10', y: 337.5 }]} />
          <Plot id="p3" top={354} height={113} y0={371.5} y1={456} pts={curve3} exp={369}
            ticks={[{ l: '10', y: 394.5 }, { l: '5', y: 420.5 }, { l: '0', y: 447.5 }]} />
          <Plot id="p4" top={467} height={117} y0={477.5} y1={558} pts={curve4} xLabels={575}
            ticks={[{ l: '0', y: 489.5 }, { l: '-5', y: 509.5 }, { l: '-10', y: 529.5 }, { l: '-15', y: 549.5 }]} />
        </PlotPanel>
        <ScopeStatus>
          <ScopeReady>Ready</ScopeReady>
          <StatusCell $w={49}>Offset=0</StatusCell>
          <StatusCell $w={44}>T=8.000</StatusCell>
        </ScopeStatus>
      </Win>

      <Watermark>CSDN @听风者i</Watermark>
    </Desktop>
  );
}
